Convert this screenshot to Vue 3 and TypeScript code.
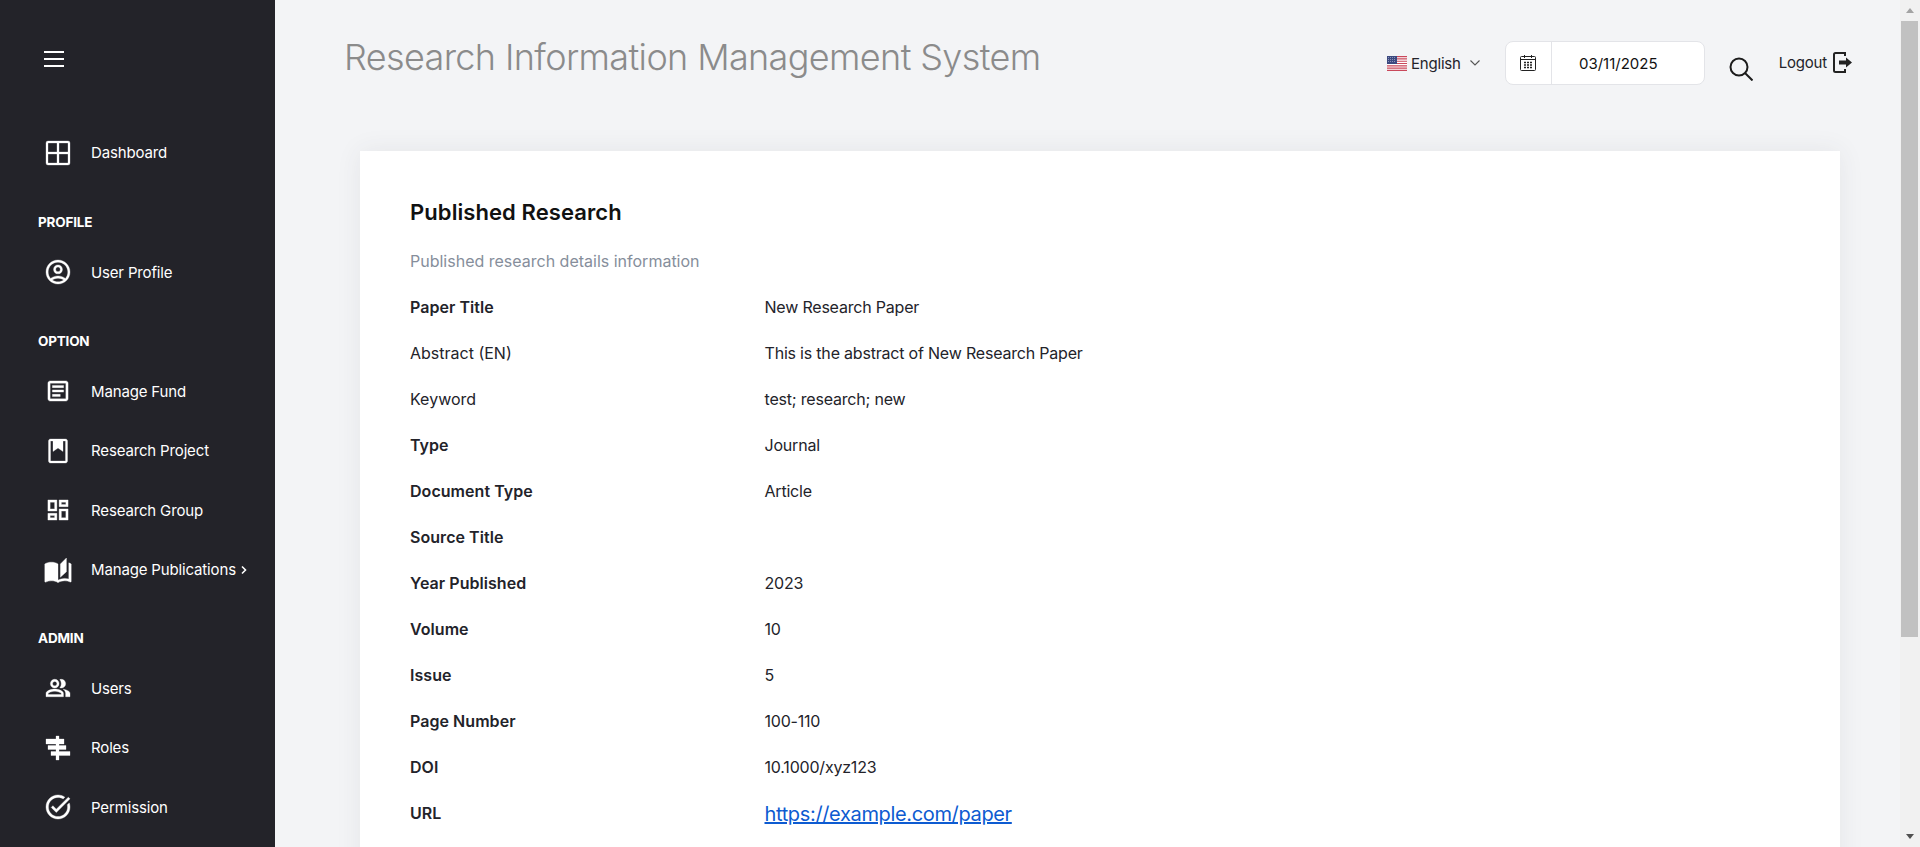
<template>
  <div class="layout">
    <aside class="sidebar">
      <button class="burger"><span></span><span></span><span></span></button>
      <nav class="nav">
        <div v-for="group in navGroups" :key="group.title" class="nav-group">
          <h4 v-if="group.title" class="nav-title">{{ group.title }}</h4>
          <a v-for="item in group.items" :key="item.name" class="nav-item">
            <svg class="nav-icon" :viewBox="item.box ?? '0 0 24 24'" fill="#fff" stroke="#fff" stroke-width=".3">
              <path v-for="d in item.paths" :key="d" :d="d" />
            </svg>
            <span>{{ item.name }}</span>
            <svg v-if="item.more" class="nav-more" viewBox="0 0 8 10" fill="none" stroke="#fff" stroke-width="1.6">
              <path d="M2 1.500 5.500 5 2 8.500" />
            </svg>
          </a>
        </div>
      </nav>
    </aside>

    <main class="main">
      <header class="topbar">
        <h1 class="page-title">Research Information Management System</h1>
        <div class="controls">
          <div class="lang">
            <svg class="flag" viewBox="0 0 20 15">
              <rect width="20" height="15" fill="#fff" />
              <path d="M0 .6h20M0 2.900h20M0 5.200h20M0 7.500h20M0 9.800h20M0 12.100h20M0 14.400h20" stroke="#c9485b" stroke-width="1.150" />
              <rect width="10" height="8" fill="#3c4a80" />
              <path d="M1 1.500h8M1 3.500h8M1 5.500h8" stroke="#aab2d2" stroke-width=".7" stroke-dasharray="1 1" />
            </svg>
            <span>English</span>
            <svg class="chevron" viewBox="0 0 10 6" fill="none" stroke="#555" stroke-width="1.100">
              <path d="M.5.5 5 5 9.500.5" />
            </svg>
          </div>
          <div class="date-box">
            <div class="date-icon">
              <svg viewBox="0 0 16 16" fill="none" stroke="#222" stroke-width="1">
                <rect x=".5" y="1.500" width="15" height="14" rx="1" />
                <path d="M4.500 0v3M11.500 0v3M.5 4.500h15" />
                <path d="M4 7.500h2M7 7.500h2M10 7.500h2M4 10h2M7 10h2M10 10h2M4 12.500h2M7 12.500h2M10 12.500h2" stroke-width="1.300" />
              </svg>
            </div>
            <div class="date-value">03/11/2025</div>
          </div>
          <svg class="search" viewBox="0 0 24 24" fill="none" stroke="#1c1c1c" stroke-width="2">
            <circle cx="10" cy="10" r="8.500" />
            <path d="m16 16 7.500 7.500" />
          </svg>
          <a class="logout">
            <span>Logout</span>
            <svg viewBox="0 0 19 21" fill="#222">
              <path d="M12 4V1H2.500C1.700 1 1 1.700 1 2.500v16c0 .8.7 1.500 1.500 1.500H12v-3" fill="none" stroke="#222" stroke-width="2" />
              <path d="M6 8.500h7v-3l6 5-6 5v-3H6z" />
            </svg>
          </a>
        </div>
      </header>

      <section class="card">
        <h2 class="card-title">Published Research</h2>
        <p class="card-sub">Published research details information</p>
        <dl class="details">
          <div v-for="row in rows" :key="row.label" class="row">
            <dt :class="{ plain: row.plain }">{{ row.label }}</dt>
            <dd>
              <a v-if="row.link" class="link">{{ row.value }}</a>
              <template v-else>{{ row.value }}</template>
            </dd>
          </div>
        </dl>
      </section>
    </main>

    <div class="scrollbar">
      <div class="scroll-btn"><span class="arrow-up"></span></div>
      <div class="scroll-thumb"></div>
      <div class="scroll-track"></div>
      <div class="scroll-btn"><span class="arrow-down"></span></div>
    </div>
  </div>
</template>

<script setup lang="ts">
interface NavItem {
  name: string;
  paths: string[];
  box?: string;
  more?: boolean;
}

const navGroups: { title: string; items: NavItem[] }[] = [
  {
    title: "",
    items: [
      {
        name: "Dashboard",
        paths: [
          "M2 0h20a2 2 0 0 1 2 2v20a2 2 0 0 1-2 2H2a2 2 0 0 1-2-2V2a2 2 0 0 1 2-2zM2 2v9h9V2zM13 2v9h9V2zM2 13v9h9v-9zM13 13v9h9v-9z",
        ],
      },
    ],
  },
  {
    title: "PROFILE",
    items: [
      {
        name: "User Profile",
        box: "1 1 22 22",
        paths: [
          "M12 1C5.900 1 1 5.900 1 12s4.900 11 11 11 11-4.900 11-11S18.100 1 12 1zM6.800 19.400c1.400-1 3.200-1.700 5.200-1.700s3.800.7 5.200 1.700c-1.400 1-3.200 1.600-5.200 1.600s-3.800-.6-5.200-1.600zm12-1.500c-1.900-1.400-4.300-2.300-6.800-2.300s-4.900.9-6.800 2.300C3.800 16.300 3 14.300 3 12c0-5 4-9 9-9s9 4 9 9c0 2.300-.8 4.300-2.200 5.900z",
          "M12 5.500c-2.300 0-4.100 1.800-4.100 4.100s1.800 4.100 4.100 4.100 4.100-1.800 4.100-4.100-1.800-4.100-4.100-4.100zm0 6.200c-1.200 0-2.100-.9-2.100-2.100s.9-2.100 2.100-2.100 2.100.9 2.100 2.100-.9 2.100-2.100 2.100z",
        ],
      },
    ],
  },
  {
    title: "OPTION",
    items: [
      {
        name: "Manage Fund",
        box: "1.300 1.300 21.400 21.400",
        paths: [
          "M19 5v14H5V5h14m0-2H5c-1.100 0-2 .9-2 2v14c0 1.100.9 2 2 2h14c1.100 0 2-.9 2-2V5c0-1.100-.9-2-2-2z",
          "M14 17H7v-2h7v2zm3-4H7v-2h10v2zm0-4H7V7h10v2z",
        ],
      },
      {
        name: "Research Project",
        paths: [
          "M4.500 0h15c1.100 0 2 .9 2 2v20c0 1.100-.9 2-2 2h-15c-1.100 0-2-.9-2-2V2c0-1.100.9-2 2-2zM4.500 2v20h15V2H17v10.500l-5-3.500-5 3.500V2z",
        ],
      },
      {
        name: "Research Group",
        box: "1.300 1.300 21.400 21.400",
        paths: [
          "M19 5v2h-4V5h4M9 5v6H5V5h4m10 8v6h-4v-6h4M9 17v2H5v-2h4M21 3h-8v6h8V3zM11 3H3v10h8V3zm10 8h-8v10h8V11zm-10 4H3v6h8v-6z",
        ],
      },
      {
        name: "Manage Publications",
        more: true,
        box: "2 1 20 20",
        paths: [
          "M19 1l-5 5v11l5-4.500V1zM1 6v14.650c0 .25.25.5.5.5.1 0 .15-.05.25-.05C3.100 20.450 5.050 20 6.500 20c1.950 0 4.050.4 5.500 1.500V6c-1.450-1.100-3.550-1.500-5.500-1.500S2.450 4.900 1 6zm22 13.500V6c-.6-.45-1.250-.75-2-1v13.500c-1.100-.35-2.300-.5-3.500-.5-1.700 0-4.150.65-5.500 1.500v2c1.350-.85 3.800-1.500 5.500-1.500 1.650 0 3.350.3 4.750 1.050.1.05.15.05.25.05.25 0 .5-.25.5-.5v-1.100z",
        ],
      },
    ],
  },
  {
    title: "ADMIN",
    items: [
      {
        name: "Users",
        box: "1 1 22 22",
        paths: [
          "M16.670 13.130C18.040 14.060 19 15.320 19 17v3h4v-3c0-2.180-3.570-3.470-6.330-3.870z",
          "M15 12c2.210 0 4-1.790 4-4s-1.790-4-4-4c-.47 0-.91.1-1.330.24C14.500 5.270 15 6.580 15 8s-.5 2.730-1.330 3.760c.42.14.86.24 1.330.24z",
          "M9 12c2.210 0 4-1.790 4-4s-1.790-4-4-4-4 1.790-4 4 1.790 4 4 4zm0-6c1.100 0 2 .9 2 2s-.9 2-2 2-2-.9-2-2 .9-2 2-2z",
          "M9 13c-2.670 0-8 1.340-8 4v3h16v-3c0-2.660-5.330-4-8-4zm6 5H3v-.99C3.200 16.290 6.300 15 9 15s5.800 1.290 6 2v1z",
        ],
      },
      {
        name: "Roles",
        paths: ["M10 0h3v3h5v5h-5v1.500h7V13.500h-7v2h11v4H13V24h-3v-4.500H5v-4h5v-2H2V9.500h8V8H0V3h10z"],
      },
      {
        name: "Permission",
        box: "2 2 20 20",
        paths: [
          "M22 5.180 10.590 16.600l-4.240-4.240 1.410-1.410 2.830 2.830 10-10L22 5.180zm-2.210 5.040c.13.57.21 1.170.21 1.780 0 4.420-3.580 8-8 8s-8-3.580-8-8 3.580-8 8-8c1.580 0 3.040.46 4.280 1.250l1.440-1.440C16.100 2.670 14.130 2 12 2 6.480 2 2 6.480 2 12s4.480 10 10 10 10-4.480 10-10c0-1.190-.22-2.330-.6-3.390l-1.610 1.610z",
        ],
      },
    ],
  },
];

const rows: { label: string; value: string; plain?: boolean; link?: boolean }[] = [
  { label: "Paper Title", value: "New Research Paper" },
  { label: "Abstract (EN)", value: "This is the abstract of New Research Paper", plain: true },
  { label: "Keyword", value: "test; research; new", plain: true },
  { label: "Type", value: "Journal" },
  { label: "Document Type", value: "Article" },
  { label: "Source Title", value: "" },
  { label: "Year Published", value: "2023" },
  { label: "Volume", value: "10" },
  { label: "Issue", value: "5" },
  { label: "Page Number", value: "100-110" },
  { label: "DOI", value: "10.1000/xyz123" },
  { label: "URL", value: "https://example.com/paper", link: true },
];
</script>

<style>
html,
body {
  margin: 0;
  height: 100%;
  overflow: hidden;
}
</style>

<style scoped>
.layout {
  display: flex;
  height: 847px;
  font-family: Inter, "Noto Sans", sans-serif;
  color: #23232a;
  background: #f3f4f6;
}

.sidebar {
  flex: 0 0 275px;
  box-sizing: border-box;
  padding: 51px 0 0 38px;
  background: #232329;
  color: #fff;
}

.burger {
  display: flex;
  flex-direction: column;
  gap: 5px;
  width: 20px;
  margin: 0 0 0 6px;
  padding: 0;
  border: 0;
  background: none;
}

.burger span {
  height: 2px;
  background: #fff;
}

.nav {
  padding-top: 56px;
}

.nav-group {
  margin-bottom: 28.800px;
}

.nav-group:first-child {
  margin-bottom: 29.600px;
}

.nav-title {
  margin: 0 0 10.500px;
  font-size: 13.500px;
  line-height: 20px;
  font-weight: 700;
  letter-spacing: -0.2px;
}

.nav-item {
  display: flex;
  align-items: center;
  height: 59.500px;
  padding-left: 8px;
  font-size: 15px;
  letter-spacing: -0.15px;
}

.nav-icon {
  flex: none;
  width: 24px;
  height: 24px;
  margin-right: 21px;
  overflow: visible;
}

.nav-more {
  width: 8px;
  height: 10px;
  margin-left: 4px;
}

.main {
  flex: 1;
  min-width: 0;
  overflow: hidden;
}

.scrollbar {
  flex: 0 0 20px;
  display: flex;
  flex-direction: column;
  background: #f1f1f1;
}

.scroll-btn {
  flex: 0 0 21px;
  display: flex;
  align-items: center;
  justify-content: center;
}

.arrow-up,
.arrow-down {
  width: 0;
  height: 0;
  border-left: 4.500px solid transparent;
  border-right: 4.500px solid transparent;
}

.arrow-up {
  border-bottom: 5px solid #a3a3a3;
}

.arrow-down {
  border-top: 5px solid #505050;
}

.scroll-thumb {
  flex: 0 0 616px;
  width: 17px;
  margin-left: 1px;
  background: #c1c1c1;
}

.scroll-track {
  flex: 1;
}

.topbar {
  display: flex;
  align-items: flex-start;
  justify-content: space-between;
  height: 151px;
  box-sizing: border-box;
  padding: 32px 48px 0 69px;
}

.page-title {
  margin: 0;
  font-size: 36px;
  line-height: 50px;
  font-weight: 300;
  letter-spacing: -0.63px;
  color: #8b8b8b;
}

.controls {
  display: flex;
  align-items: flex-start;
  padding-top: 1px;
  font-size: 15px;
  letter-spacing: -0.2px;
}

.lang {
  display: flex;
  align-items: center;
  gap: 4px;
  height: 44px;
  margin: 8px 25px 0 0;
}

.flag {
  width: 20px;
  height: 15px;
}

.chevron {
  width: 10px;
  height: 6px;
  margin-left: 5px;
}

.date-box {
  display: flex;
  width: 200px;
  height: 44px;
  margin-top: 8px;
  box-sizing: border-box;
  border: 1px solid #e3e4e8;
  border-radius: 8px;
  background: #fff;
}

.date-icon {
  display: flex;
  align-items: center;
  justify-content: center;
  width: 45px;
  border-right: 1px solid #e3e4e8;
}

.date-icon svg {
  width: 16px;
  height: 16px;
}

.date-value {
  flex: 1;
  padding: 1px 19px 0 0;
  line-height: 42px;
  text-align: center;
  color: #111;
  letter-spacing: 0;
}

.search {
  width: 24px;
  height: 24px;
  margin: 24px 0 0 24px;
}

.logout {
  display: flex;
  align-items: center;
  gap: 6px;
  margin: 19px 0 0 26px;
}

.logout svg {
  width: 19px;
  height: 21px;
}

.card {
  margin: 0 60px 0 85px;
  height: 957px;
  box-sizing: border-box;
  padding: 33px 50px 0;
  background: #fff;
  box-shadow: 0 0 24px rgba(60, 60, 80, 0.08);
}

.card-title {
  margin: 0;
  font-size: 22px;
  line-height: 56px;
  font-weight: 600;
  letter-spacing: 0.08px;
  color: #111;
}

.card-sub {
  margin: 0;
  padding: 1px 0 3px;
  font-size: 16px;
  line-height: 40px;
  color: #868e9b;
}

.details {
  margin: 0;
}

.row {
  display: grid;
  grid-template-columns: 354.500px 1fr;
  align-items: center;
  height: 46px;
  font-size: 16px;
  letter-spacing: -0.2px;
}

.row dt {
  font-weight: 600;
  letter-spacing: 0.05px;
}

.row dt.plain {
  font-weight: 400;
  letter-spacing: 0;
}

.row dd {
  margin: 0;
}

.link {
  display: inline-block;
  padding-top: 2px;
  font-size: 20px;
  letter-spacing: -0.35px;
  color: #0d5bd1;
  text-decoration: underline;
}
</style>
